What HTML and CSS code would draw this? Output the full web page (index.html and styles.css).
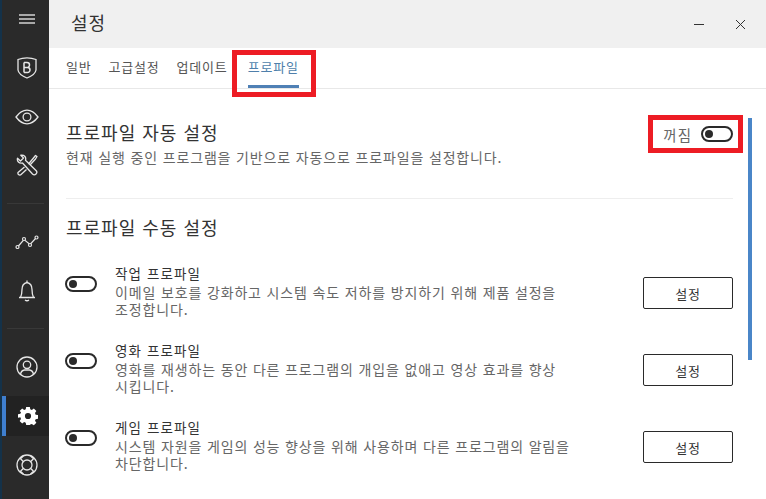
FILE: index.html
```html
<!DOCTYPE html>
<html lang="ko">
<head>
<meta charset="utf-8">
<title>설정</title>
<link rel="stylesheet" href="styles.css">
</head>
<body>
<div class="app">
  <nav class="sidebar">
    <div class="nav-item nav-menu"><svg width="16" height="10" viewBox="0 0 16 10"><path d="M0 1h16M0 5h16M0 9h16" stroke="#a8a8a8" stroke-width="2"/></svg></div>
    <div class="nav-item nav-shield"><svg width="20" height="22" viewBox="0 0 20 22" fill="none" stroke="#e6e6e6" stroke-width="1.300"><path d="M1 2.500Q5 .8 10 .8T19 2.500V13Q18.500 17.500 10 21 1.500 17.500 1 13Z"/><path d="M7 5.500V15.500M7 5.500h3a2.500 2.500 0 0 1 0 5H7M7 10.500h3.500a2.500 2.500 0 0 1 0 5H7" stroke-width="1.500"/></svg></div>
    <div class="nav-item nav-eye"><svg width="24" height="16" viewBox="0 0 24 16" fill="none" stroke="#e6e6e6" stroke-width="1.300"><path d="M1 8Q6 1.200 12 1.200T23 8Q18 14.800 12 14.800T1 8Z"/><circle cx="12" cy="8" r="3.900"/></svg></div>
    <div class="nav-item nav-tools"><svg width="22" height="22" viewBox="0 0 22 22" fill="none" stroke="#e6e6e6" stroke-width="1.300" stroke-linejoin="round"><path d="M4.800 1.200 7.500 4 4.500 7 1.500 4.200C.8 7 3 10 6.500 9L16.500 20A2.300 2.300 0 0 0 20 16.500L9.500 6.200C10.500 3 8 .5 4.800 1.200Z"/><path d="M8.500 13 2 18.500A2 2 0 0 0 4.500 21L10.500 15.500M12.500 10 17.500 4l2-2.500 1.500 1-1.500 2.500-5.500 6"/></svg></div>
    <div class="nav-sep"></div>
    <div class="nav-item nav-graph"><svg width="24" height="14" viewBox="0 0 24 14" fill="none" stroke="#e6e6e6" stroke-width="1.200"><path d="M3 11.500 9 4.500l6 5 6-6.500"/><g fill="#2a2a2a"><circle cx="2.500" cy="12" r="1.500"/><circle cx="9" cy="4" r="1.500"/><circle cx="15" cy="10" r="1.500"/><circle cx="21.500" cy="2.500" r="1.500"/></g></svg></div>
    <div class="nav-item nav-bell"><svg width="18" height="22" viewBox="0 0 18 22" fill="none" stroke="#e6e6e6" stroke-width="1.300"><path d="M1 17.500h16M2.500 17.500Q4 14 4 9.500 4 3.500 9 2.500 14 3.500 14 9.500 14 14 15.500 17.500M9 .5V2.500M7 20q2 1.500 4 0"/></svg></div>
    <div class="nav-sep"></div>
    <div class="nav-item nav-user"><svg width="22" height="22" viewBox="0 0 22 22" fill="none" stroke="#e6e6e6" stroke-width="1.300"><circle cx="11" cy="11" r="10"/><circle cx="11" cy="8.800" r="3.700"/><path d="M4.500 18.500Q5 14.500 8.500 14h5q3.500.5 4 4.500"/></svg></div>
    <div class="nav-item nav-gear is-active"><svg width="20" height="20" viewBox="-1 -1 22 22"><path fill="#fff" fill-rule="evenodd" d="M8 0h4l.5 2.600 1.700.7L16.400 1.800l2.800 2.800-1.500 2.200.7 1.700 2.600.5v4l-2.600.5-.7 1.700 1.500 2.200-2.800 2.800-2.200-1.500-1.700.7L12 20H8l-.5-2.600-1.700-.7-2.200 1.500-2.800-2.800 1.500-2.200-.7-1.700L-1 12V8l2.600-.5.700-1.700L.8 4.600 3.600 1.800l2.200 1.500 1.700-.7ZM10 6.600a3.400 3.400 0 1 0 0 6.800 3.400 3.400 0 0 0 0-6.800Z"/></svg></div>
    <div class="nav-item nav-help"><svg width="22" height="22" viewBox="0 0 22 22" fill="none" stroke="#e6e6e6" stroke-width="1.300"><circle cx="11" cy="11" r="10"/><circle cx="11" cy="11" r="5"/><path d="M7.500 1.800l-3 3 3 3M14.500 1.800l3 3-3 3M7.500 20.200l-3-3 3-3M14.500 20.200l3-3-3-3"/></svg></div>
  </nav>

  <main class="main">
    <header class="titlebar">
      <h1 class="title">설정</h1>
      <div class="win-btns">
        <svg width="11" height="11" viewBox="0 0 11 11"><path d="M0 5.500h10" stroke="#333" stroke-width="1"/></svg>
        <svg width="11" height="11" viewBox="0 0 11 11"><path d="M1 1l9 9M10 1l-9 9" stroke="#333" stroke-width="1"/></svg>
      </div>
    </header>

    <div class="tabs">
      <span class="tab">일반</span>
      <span class="tab">고급설정</span>
      <span class="tab">업데이트</span>
      <span class="tab tab-active">프로파일</span>
    </div>

    <section class="auto">
      <div class="auto-text">
        <h2 class="section-title">프로파일 자동 설정</h2>
        <p class="desc">현재 실행 중인 프로그램을 기반으로 자동으로 프로파일을 설정합니다.</p>
      </div>
      <div class="auto-toggle">
        <span class="off-label">꺼짐</span>
        <span class="toggle"></span>
      </div>
    </section>

    <section class="manual">
      <h2 class="section-title">프로파일 수동 설정</h2>
      <div class="rows">
        <div class="row">
          <span class="toggle"></span>
          <div class="row-text">
            <h3 class="row-title">작업 프로파일</h3>
            <p class="desc">이메일 보호를 강화하고 시스템 속도 저하를 방지하기 위해 제품 설정을<br>조정합니다.</p>
          </div>
          <button class="btn">설정</button>
        </div>
        <div class="row">
          <span class="toggle"></span>
          <div class="row-text">
            <h3 class="row-title">영화 프로파일</h3>
            <p class="desc">영화를 재생하는 동안 다른 프로그램의 개입을 없애고 영상 효과를 향상<br>시킵니다.</p>
          </div>
          <button class="btn">설정</button>
        </div>
        <div class="row">
          <span class="toggle"></span>
          <div class="row-text">
            <h3 class="row-title">게임 프로파일</h3>
            <p class="desc">시스템 자원을 게임의 성능 향상을 위해 사용하며 다른 프로그램의 알림을<br>차단합니다.</p>
          </div>
          <button class="btn">설정</button>
        </div>
      </div>
    </section>

    <div class="scrollbar"></div>
    <div class="mark mark-tab"></div>
    <div class="mark mark-toggle"></div>
  </main>
</div>
</body>
</html>
```

FILE: styles.css
```css
* { box-sizing: border-box; }
html, body { margin: 0; padding: 0; }
body {
  width: 766px;
  height: 499px;
  overflow: hidden;
  background: #fff;
  font-family: "Noto Sans CJK KR", "Noto Sans", sans-serif;
}
.app { display: flex; height: 499px; }

.sidebar {
  width: 49px;
  flex: none;
  background: #2a2a2a;
  border-left: 2px solid #14324a;
  display: flex;
  flex-direction: column;
  height: 499px;
}
.nav-item { display: flex; align-items: center; justify-content: center; flex: none; padding-left: 3px; }
.nav-menu { height: 38px; }
.nav-shield { height: 60px; }
.nav-eye { height: 38px; }
.nav-tools { height: 58px; }
.nav-graph { height: 76px; }
.nav-bell { height: 22px; }
.nav-sep { height: 1px; flex: none; background: #383838; margin: 0 5px; }
.nav-tools + .nav-sep { margin-top: 9px; }
.nav-bell + .nav-sep { margin-top: 26px; }
.nav-user { height: 40px; margin-top: 18px; }
.nav-gear { height: 40px; margin-top: 9px; }
.nav-help { height: 40px; margin-top: 9px; }
.is-active { background: #222; border-left: 4px solid #3f7fcf; padding-left: 0; }

.main { flex: 1; position: relative; min-width: 0; }

.titlebar {
  height: 48px;
  background: #f0f0f0;
  display: flex;
  align-items: center;
  justify-content: space-between;
  padding: 0 20px 4px 22px;
}
.title { margin: 0; font-size: 18px; font-weight: 400; color: #333; letter-spacing: 1px; }
.win-btns { display: flex; gap: 30px; padding-top: 4px; }

.tabs {
  height: 41px;
  border-bottom: 1px solid #e8e8e8;
  display: flex;
  gap: 17px;
  padding-left: 17px;
}
.tab { font-size: 13px; color: #555; line-height: 37px; height: 40px; letter-spacing: .8px; }
.tab-active { color: #4f7fab; border-bottom: 3px solid #4f80b5; margin-left: 3px; }

.auto {
  margin: 0 33px 0 17px;
  height: 110px;
  padding-top: 30px;
  border-bottom: 1px solid #eee;
  display: flex;
  justify-content: space-between;
}
.section-title { margin: 0; font-size: 18px; line-height: 26px; font-weight: 400; color: #333; letter-spacing: 1px; }
.desc { margin: 0; font-size: 14px; line-height: 17px; color: #666; letter-spacing: .85px; }
.auto-text .desc { margin-top: 4px; }
.auto-toggle { display: flex; align-items: center; gap: 9px; height: 24px; margin-top: 3px; }
.off-label { font-size: 14.500px; color: #666; letter-spacing: 1px; }

.toggle {
  display: block;
  flex: none;
  position: relative;
  width: 32px;
  height: 16px;
  border: 2px solid #2a2a2a;
  border-radius: 8px;
}
.toggle::before {
  content: "";
  position: absolute;
  left: 2px;
  top: 2px;
  width: 8px;
  height: 8px;
  border-radius: 50%;
  background: #2a2a2a;
}

.manual { margin: 0 33px 0 17px; padding-top: 15px; }
.rows { margin-top: 24px; display: flex; flex-direction: column; gap: 20px; }
.row { display: flex; align-items: flex-start; height: 57px; }
.row .toggle { margin-left: -1px; margin-top: 12px; }
.row-text { width: 470px; margin-left: 18px; }
.row-title { margin: 0 0 2px; font-size: 13.500px; line-height: 18px; font-weight: 400; color: #333; letter-spacing: 1.100px; }
.btn {
  margin: 13px 0 0 auto;
  width: 90px;
  height: 32px;
  background: #fff;
  border: 1px solid #2a2a2a;
  border-radius: 2px;
  font: inherit;
  font-size: 13px;
  letter-spacing: .8px;
  color: #333;
  padding: 0;
}

.scrollbar { position: absolute; left: 699px; top: 118px; width: 4px; height: 242px; background: #4a86c8; }
.mark { position: absolute; border: 5px solid #ed1c24; }
.mark-tab { left: 183px; top: 50px; width: 84px; height: 47px; }
.mark-toggle { left: 599px; top: 115px; width: 95px; height: 38px; }
```
